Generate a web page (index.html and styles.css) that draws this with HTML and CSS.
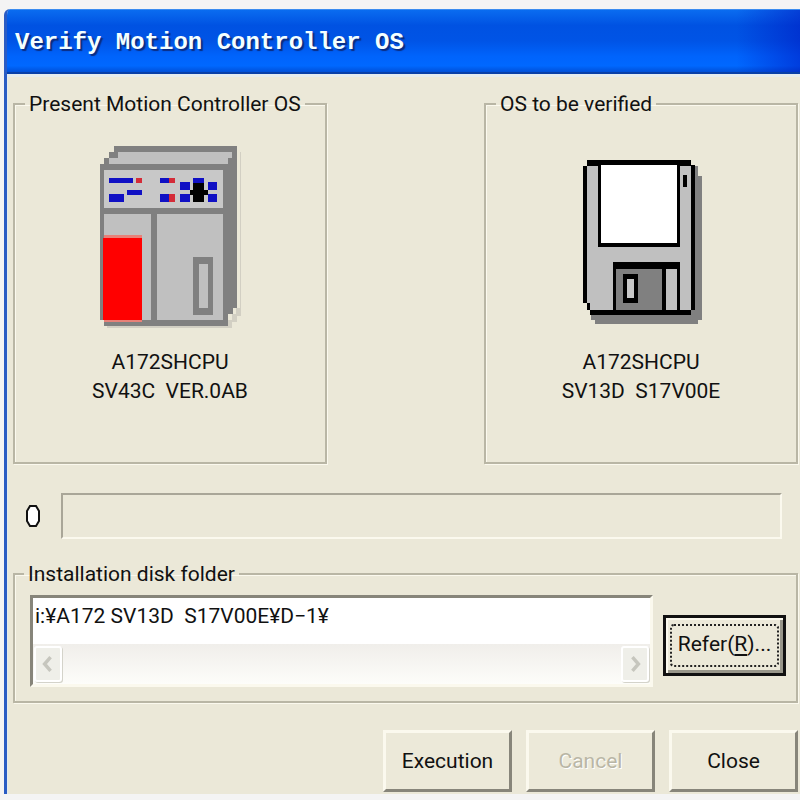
FILE: index.html
```html
<!DOCTYPE html>
<html lang="en">
<head>
<meta charset="utf-8">
<title>Verify Motion Controller OS</title>
<link rel="stylesheet" href="styles.css">
</head>
<body>
<main class="window">
  <header class="titlebar"><h1>Verify Motion Controller OS</h1></header>
  <form class="content">
    <div class="systems">
      <fieldset class="group">
        <legend>Present Motion Controller OS</legend>
        <svg class="device" viewBox="0 0 480 600" shape-rendering="crispEdges" aria-hidden="true">
          <path fill="#d2cfc3" d="M441 50h9v468h-12v18h-12v18h-13v20H50v5h376v-18h14v-18h14V50z"/>
          <path fill="#808080" d="M72 33h369v485h-12v18h-14v38H42v-19H31V86h11V70h16V50h14z"/>
          <path fill="#c0c0c0" d="M84 50h342v20h-12v16H57V70h27z"/>
          <path fill="#c8c8c8" d="M42 106h356v114H42z"/>
          <path fill="#c0c0c0" d="M42 236h142v318H42zM202 236h196v318H202z"/>
          <path fill="#f00" d="M40 309h116v246H40z"/>
          <path fill="#e88078" d="M42 299h114v10H42zM42 555h114v5H42z"/>
          <path fill="#808080" d="M309 366h61v174h-61z"/>
          <path fill="#c0c0c0" d="M327 387h27v132h-27z"/>
          <path fill="#1010c4" d="M57 128h72v15H57zM57 178h45v22H57zM111 164h45v15h-45zM210 128h28v15h-28zM210 178h28v22h-28zM271 142h28v22h-28zM271 178h28v22h-28zM353 142h28v22h-28zM353 178h28v22h-28zM309 128h33v15h-33z"/>
          <path fill="#d42c38" d="M139 128h17v15h-17zM238 128h17v15h-17zM238 178h17v22h-17z"/>
          <path fill="#000" d="M309 143h33v21h11v15h-11v21h-33v-21h-10v-15h10z"/>
        </svg>
        <p class="version">A172SHCPU<br>SV43C&nbsp; VER.0AB</p>
      </fieldset>
      <fieldset class="group">
        <legend>OS to be verified</legend>
        <svg class="device" viewBox="-30 -30 480 600" shape-rendering="crispEdges" aria-hidden="true">
          <path fill="#808080" d="M371 62h11v30h11v432h-11v14H72v-14H60v-16h300v-14h11z"/>
          <path fill="#000" d="M48 46h312v15h11v434h-11v14H58v-14H48v-22H37V62h11z"/>
          <path fill="#c0c0c0" d="M48 62h312v433H58v-22H48z"/>
          <path fill="#000" d="M81 61h246v245H81z"/>
          <path fill="#fff" d="M91 61h226v233H91z"/>
          <path fill="#000" d="M337 90h12v37h-12zM125 352h202v145H125z"/>
          <path fill="#808080" d="M135 371h138v124H135z"/>
          <path fill="#c0c0c0" d="M284 371h34v124h-34z"/>
          <path fill="#000" d="M157 387h43v86h-43z"/>
          <path fill="#c8c8c8" d="M167 401h22v57h-22z"/>
        </svg>
        <p class="version">A172SHCPU<br>SV13D&nbsp; S17V00E</p>
      </fieldset>
    </div>

    <div class="status">
      <svg class="lamp" viewBox="0 0 16 24" aria-hidden="true"><path d="M5 2h6l3 5v10l-3 5H5l-3-5V7z"/></svg>
      <div class="progress" role="progressbar" aria-label="Verification progress"></div>
    </div>

    <fieldset class="group folder">
      <legend><label for="path">Installation disk folder</label></legend>
      <div class="pathbox">
        <input id="path" type="text" value="i:¥A172 SV13D&nbsp; S17V00E¥D−1¥">
        <div class="scrollbar">
          <button type="button" disabled aria-label="Scroll left"><svg viewBox="0 0 28 36"><path d="M17 10l-7 8 7 8"/></svg></button>
          <button type="button" disabled aria-label="Scroll right"><svg viewBox="0 0 28 36"><path d="M11 10l7 8-7 8"/></svg></button>
        </div>
      </div>
      <button type="button" class="refer"><span>Refer(<u>R</u>)...</span></button>
    </fieldset>

    <div class="actions">
      <button type="button">Execution</button>
      <button type="button" disabled>Cancel</button>
      <button type="button">Close</button>
    </div>
  </form>
</main>
</body>
</html>
```
FILE: styles.css
```css
* {
  box-sizing: border-box;
}

body {
  margin: 0;
  padding: 9px 0 6px 4px;
  background: #f4f4f4;
  color: #111;
  font: 21px/28px Roboto, "Liberation Sans", sans-serif;
}

button,
input {
  font: inherit;
  color: inherit;
}

.window {
  border-left: 3px solid #2a5cc4;
  border-top-left-radius: 6px;
  background: #ebe8d8;
  overflow: hidden;
}

.titlebar {
  display: flex;
  align-items: center;
  height: 65px;
  margin-left: -3px;
  padding: 4px 0 0 11px;
  border-top: 1px solid #3b8cf0;
  border-bottom: 2px solid #083fa8;
  background:
    linear-gradient(90deg, transparent 92%, rgba(0, 20, 190, 0.5)),
    linear-gradient(#0a6cf0, #0052e2 25%, #0054e6 50%, #0064fc 75%, #0068ff 90%, #0050d8);
}

.titlebar h1 {
  margin: 0;
  color: #f4ffff;
  font: bold 24px/32px "Liberation Mono", monospace;
  text-shadow: 2px 2px 1px #0a2c80;
}

.content {
  padding: 14px 2px 2px 5px;
  border-top: 3px solid #e4ebee;
  border-left: 1px solid #e4ebee;
}

.systems {
  display: grid;
  grid-template-columns: 2fr 2fr;
  column-gap: 20%;
}

.group {
  min-width: 0;
  margin: 0;
  padding: 18px 8px 56px;
  border: 2px solid #b9b6a5;
  box-shadow: 1px 1px #fbf9ee, inset 1px 1px #fbf9ee;
}

.group legend {
  margin-left: 2px;
  padding: 0 4px;
  line-height: 26px;
  white-space: nowrap;
}

.device {
  display: block;
  width: 160px;
  height: 200px;
  margin: 0 auto 13px;
}

.version {
  margin: 0;
  line-height: 29px;
  text-align: center;
}

.status {
  display: flex;
  align-items: center;
  gap: 20px;
  margin: 29px 16px 22px 12px;
}

.lamp {
  width: 16px;
  height: 24px;
  fill: #fff;
  stroke: #111;
  stroke-width: 2;
}

.progress {
  flex: 1;
  height: 46px;
  border: 2px solid;
  border-color: #a9a698 #fbf9ee #fbf9ee #a9a698;
}

.folder {
  display: flex;
  align-items: center;
  gap: 10px;
  padding: 8px 10px 14px 15px;
}

.folder legend {
  margin-left: -6px;
}

.pathbox {
  flex: 1;
  min-width: 0;
  border: 3px solid;
  border-color: #87857a #fbf9ee #fbf9ee #87857a;
  background: #fff;
}

.pathbox input {
  display: block;
  width: 100%;
  height: 46px;
  padding: 0 2px 10px;
  border: 0;
  background: #fff;
  outline: 0;
}

.scrollbar {
  display: flex;
  justify-content: space-between;
  padding: 2px 1px;
  background: linear-gradient(#f0eeea, #fdfdfa);
}

.scrollbar button {
  width: 28px;
  height: 36px;
  padding: 0;
  border: 2px solid #fff;
  border-radius: 3px;
  background: #efefe9;
  box-shadow: 1px 1px #d4d3ca;
}

.scrollbar svg {
  display: block;
  width: 100%;
  height: 100%;
  fill: none;
  stroke: #c6c6be;
  stroke-width: 4;
}

.actions {
  display: flex;
  justify-content: flex-end;
  gap: 14px;
  margin-top: 27px;
}

.actions button {
  width: 129px;
  height: 62px;
  padding: 0;
  border: 3px solid;
  border-color: #fbf9ee #87857a #87857a #fbf9ee;
  background: #ece9d9;
}

.actions button:disabled {
  color: #b9b6a5;
  text-shadow: 1px 1px #fff;
}

.refer {
  width: 123px;
  height: 61px;
  margin-top: 8px;
  padding: 4px;
  border: 3px solid #111;
  background: #ece9d9;
  box-shadow: inset 2px 2px #fbf9ee, inset -3px -3px #98968a;
}

.refer span {
  display: block;
  padding: 4px 0 7px;
  border: 2px dotted #222;
  border-radius: 4px;
}

.refer u {
  text-underline-offset: 3px;
}
```
